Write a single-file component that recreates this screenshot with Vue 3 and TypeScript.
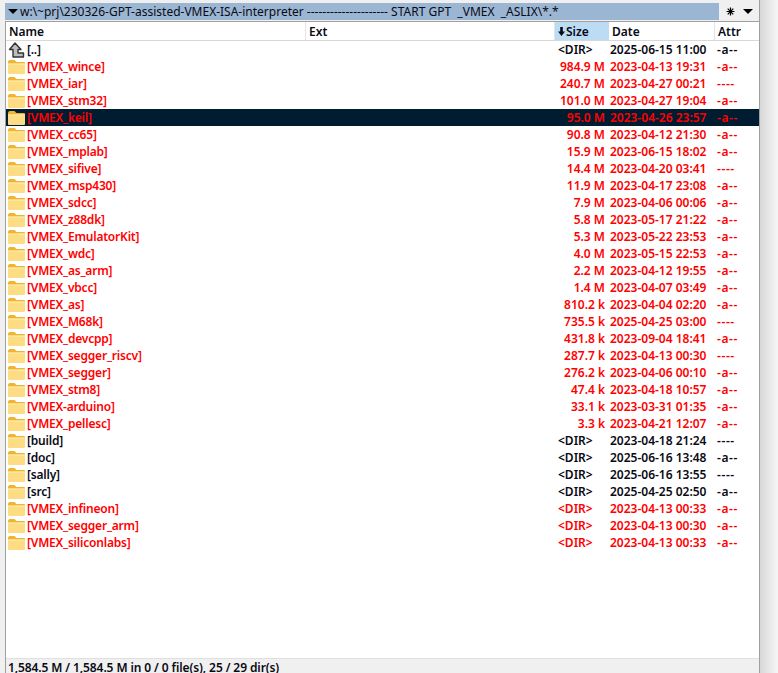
<script setup lang="ts">
interface Row {
  name: string
  size: string
  date: string
  attr: string
  red?: boolean
  up?: boolean
  selected?: boolean
}

// kept in script because the template compiler collapses the double spaces
const pathText = 'w:\\~prj\\230326-GPT-assisted-VMEX-ISA-interpreter --------------------- START GPT  _VMEX  _ASLIX\\*.*'

const rows: Row[] = [
  { name: '[..]', size: '<DIR>', date: '2025-06-15 11:00', attr: '-a--', up: true },
  { name: '[VMEX_wince]', size: '984.9 M', date: '2023-04-13 19:31', attr: '-a--', red: true },
  { name: '[VMEX_iar]', size: '240.7 M', date: '2023-04-27 00:21', attr: '----', red: true },
  { name: '[VMEX_stm32]', size: '101.0 M', date: '2023-04-27 19:04', attr: '-a--', red: true },
  { name: '[VMEX_keil]', size: '95.0 M', date: '2023-04-26 23:57', attr: '-a--', red: true, selected: true },
  { name: '[VMEX_cc65]', size: '90.8 M', date: '2023-04-12 21:30', attr: '-a--', red: true },
  { name: '[VMEX_mplab]', size: '15.9 M', date: '2023-06-15 18:02', attr: '-a--', red: true },
  { name: '[VMEX_sifive]', size: '14.4 M', date: '2023-04-20 03:41', attr: '----', red: true },
  { name: '[VMEX_msp430]', size: '11.9 M', date: '2023-04-17 23:08', attr: '-a--', red: true },
  { name: '[VMEX_sdcc]', size: '7.9 M', date: '2023-04-06 00:06', attr: '-a--', red: true },
  { name: '[VMEX_z88dk]', size: '5.8 M', date: '2023-05-17 21:22', attr: '-a--', red: true },
  { name: '[VMEX_EmulatorKit]', size: '5.3 M', date: '2023-05-22 23:53', attr: '-a--', red: true },
  { name: '[VMEX_wdc]', size: '4.0 M', date: '2023-05-15 22:53', attr: '-a--', red: true },
  { name: '[VMEX_as_arm]', size: '2.2 M', date: '2023-04-12 19:55', attr: '-a--', red: true },
  { name: '[VMEX_vbcc]', size: '1.4 M', date: '2023-04-07 03:49', attr: '-a--', red: true },
  { name: '[VMEX_as]', size: '810.2 k', date: '2023-04-04 02:20', attr: '-a--', red: true },
  { name: '[VMEX_M68k]', size: '735.5 k', date: '2025-04-25 03:00', attr: '----', red: true },
  { name: '[VMEX_devcpp]', size: '431.8 k', date: '2023-09-04 18:41', attr: '-a--', red: true },
  { name: '[VMEX_segger_riscv]', size: '287.7 k', date: '2023-04-13 00:30', attr: '----', red: true },
  { name: '[VMEX_segger]', size: '276.2 k', date: '2023-04-06 00:10', attr: '-a--', red: true },
  { name: '[VMEX_stm8]', size: '47.4 k', date: '2023-04-18 10:57', attr: '-a--', red: true },
  { name: '[VMEX-arduino]', size: '33.1 k', date: '2023-03-31 01:35', attr: '-a--', red: true },
  { name: '[VMEX_pellesc]', size: '3.3 k', date: '2023-04-21 12:07', attr: '-a--', red: true },
  { name: '[build]', size: '<DIR>', date: '2023-04-18 21:24', attr: '----' },
  { name: '[doc]', size: '<DIR>', date: '2025-06-16 13:48', attr: '-a--' },
  { name: '[sally]', size: '<DIR>', date: '2025-06-16 13:55', attr: '----' },
  { name: '[src]', size: '<DIR>', date: '2025-04-25 02:50', attr: '-a--' },
  { name: '[VMEX_infineon]', size: '<DIR>', date: '2023-04-13 00:33', attr: '-a--', red: true },
  { name: '[VMEX_segger_arm]', size: '<DIR>', date: '2023-04-13 00:30', attr: '-a--', red: true },
  { name: '[VMEX_siliconlabs]', size: '<DIR>', date: '2023-04-13 00:33', attr: '-a--', red: true },
]
</script>

<template>
  <div class="window">
    <div class="main">
      <div class="pathbar">
        <div class="path">
          <span class="drop"></span>
          <span class="path-text">{{ pathText }}</span>
        </div>
        <div class="tools">
          <svg class="star" viewBox="0 0 9 9" width="9" height="9">
            <path d="M4.5 0.5 V8.5 M0.5 4.5 H8.5 M1.7 1.7 L7.3 7.3 M7.3 1.7 L1.7 7.3" stroke="#000" stroke-width="1.2" />
          </svg>
          <span class="drop"></span>
        </div>
      </div>
      <div class="panel">
        <div class="head">
          <div class="col-name">Name</div>
          <div class="col-ext">Ext</div>
          <div class="col-size sorted">
            <svg class="sort" viewBox="0 0 7 9" width="7" height="9">
              <path d="M2.2 0 H4.8 V4.5 H7 L3.5 9 L0 4.5 H2.2 Z" fill="#0a0a14" />
            </svg>
            Size
          </div>
          <div class="col-date">Date</div>
          <div class="col-attr">Attr</div>
        </div>
        <div class="list">
          <div
            v-for="r in rows"
            :key="r.name"
            class="row"
            :class="{ red: r.red, selected: r.selected }"
          >
            <div class="col-name cell">
              <svg v-if="r.up" class="icon" viewBox="0 0 17 16" width="17" height="16">
                <path d="M7 1 L13 7.5 H10 V11 H15.5 V15 H5 V7.5 H1.5 Z" fill="#bdbdbd" stroke="#333" stroke-width="1.4" stroke-linejoin="round" />
              </svg>
              <svg v-else class="icon" viewBox="0 0 17 14" width="17" height="14">
                <path d="M0 2 Q0 0 2 0 H6.5 L8.5 2 H16 Q17 2 17 3 V5 H0 Z" fill="#f2b32e" />
                <rect x="0" y="3.5" width="17" height="10.5" rx="1" fill="#fddc84" />
                <rect x="0" y="3.5" width="17" height="1" fill="#feedb4" />
              </svg>
              <span class="name">{{ r.name }}</span>
            </div>
            <div class="col-ext"></div>
            <div class="col-size" :class="{ dir: r.size === '<DIR>' }">{{ r.size }}</div>
            <div class="col-date">{{ r.date }}</div>
            <div class="col-attr">{{ r.attr }}</div>
          </div>
        </div>
        <div class="status">1,584.5 M / 1,584.5 M in 0 / 0 file(s), 25 / 29 dir(s)</div>
      </div>
    </div>
    <div class="gutter"></div>
  </div>
</template>

<style>
html,
body {
  margin: 0;
  background: #f0f0f0;
}
</style>

<style scoped>
.window {
  width: 778px;
  height: 673px;
  overflow: hidden;
  display: flex;
  background: #f0f0f0;
  font-family: "Noto Sans", "DejaVu Sans", sans-serif;
  font-size: 12px;
  font-weight: 600;
  color: #0a0a14;
}

.main {
  width: 760px;
  flex: none;
  display: flex;
  flex-direction: column;
  padding: 3px 0 0 5px;
  box-sizing: border-box;
  border-right: 1px solid #a0a0a0;
}

.gutter {
  flex: 1;
  background: linear-gradient(to right, #d8d8d8, #f6f6f6);
}

.pathbar {
  display: flex;
  height: 17px;
  margin-bottom: 1px;
  flex: none;
}

.path {
  width: 714px;
  background: #9bb6d2;
  display: flex;
  align-items: center;
  gap: 2px;
  padding-left: 3px;
  box-sizing: border-box;
  font-weight: 400;
  overflow: hidden;
}

.path-text {
  white-space: pre;
}

.tools {
  flex: 1;
  display: flex;
  align-items: center;
  justify-content: space-between;
  padding: 0 6px 0 7px;
}

.drop {
  flex: none;
  width: 0;
  height: 0;
  border-left: 5px solid transparent;
  border-right: 5px solid transparent;
  border-top: 5px solid #000;
}

.panel {
  flex: 1;
  display: flex;
  flex-direction: column;
  background: #fff;
  border-left: 1px solid #a0a0a0;
  min-height: 0;
}

.head {
  display: flex;
  height: 18px;
  flex: none;
  align-items: stretch;
  background: #fff;
  border-top: 1px solid #a0a0a0;
  border-bottom: 1px solid #d8d8d8;
}

.head > div {
  display: flex;
  align-items: center;
  padding-left: 3px;
  box-sizing: border-box;
  border-right: 1px solid #e4e4e4;
}

.head .col-attr {
  border-right: 0;
}

.head .sorted {
  background: #bcdcf4;
  border-right: 0;
}

.sort {
  margin-right: 1px;
}

.list {
  flex: 1;
  min-height: 0;
}

.row {
  display: flex;
  height: 17px;
  line-height: 17px;
  white-space: nowrap;
}

.row.red {
  color: #ff0000;
}

.row.selected {
  background: #001c30;
}

.col-name {
  width: 300px;
  flex: none;
}

.cell {
  display: flex;
  align-items: center;
  gap: 2px;
  padding-left: 2px;
  box-sizing: border-box;
}

.name {
  letter-spacing: -0.2px;
}

.icon {
  flex: none;
}

.col-ext {
  width: 249px;
  flex: none;
}

.col-size {
  width: 54px;
  flex: none;
  text-align: right;
  box-sizing: border-box;
  padding-right: 4px;
}

.col-size.dir {
  text-align: left;
  padding: 0 0 0 3px;
}

.col-date {
  width: 106px;
  flex: none;
  padding-left: 1px;
  box-sizing: border-box;
}

.col-attr {
  flex: 1;
  padding-left: 2px;
  box-sizing: border-box;
  letter-spacing: 0.6px;
}

.head .col-attr {
  letter-spacing: 0;
}

.status {
  height: 14px;
  flex: none;
  line-height: 17px;
  padding-left: 2px;
  letter-spacing: -0.1px;
  background: #f0f0f0;
  overflow: hidden;
  border-top: 1px solid #e0e0e0;
}
</style>
